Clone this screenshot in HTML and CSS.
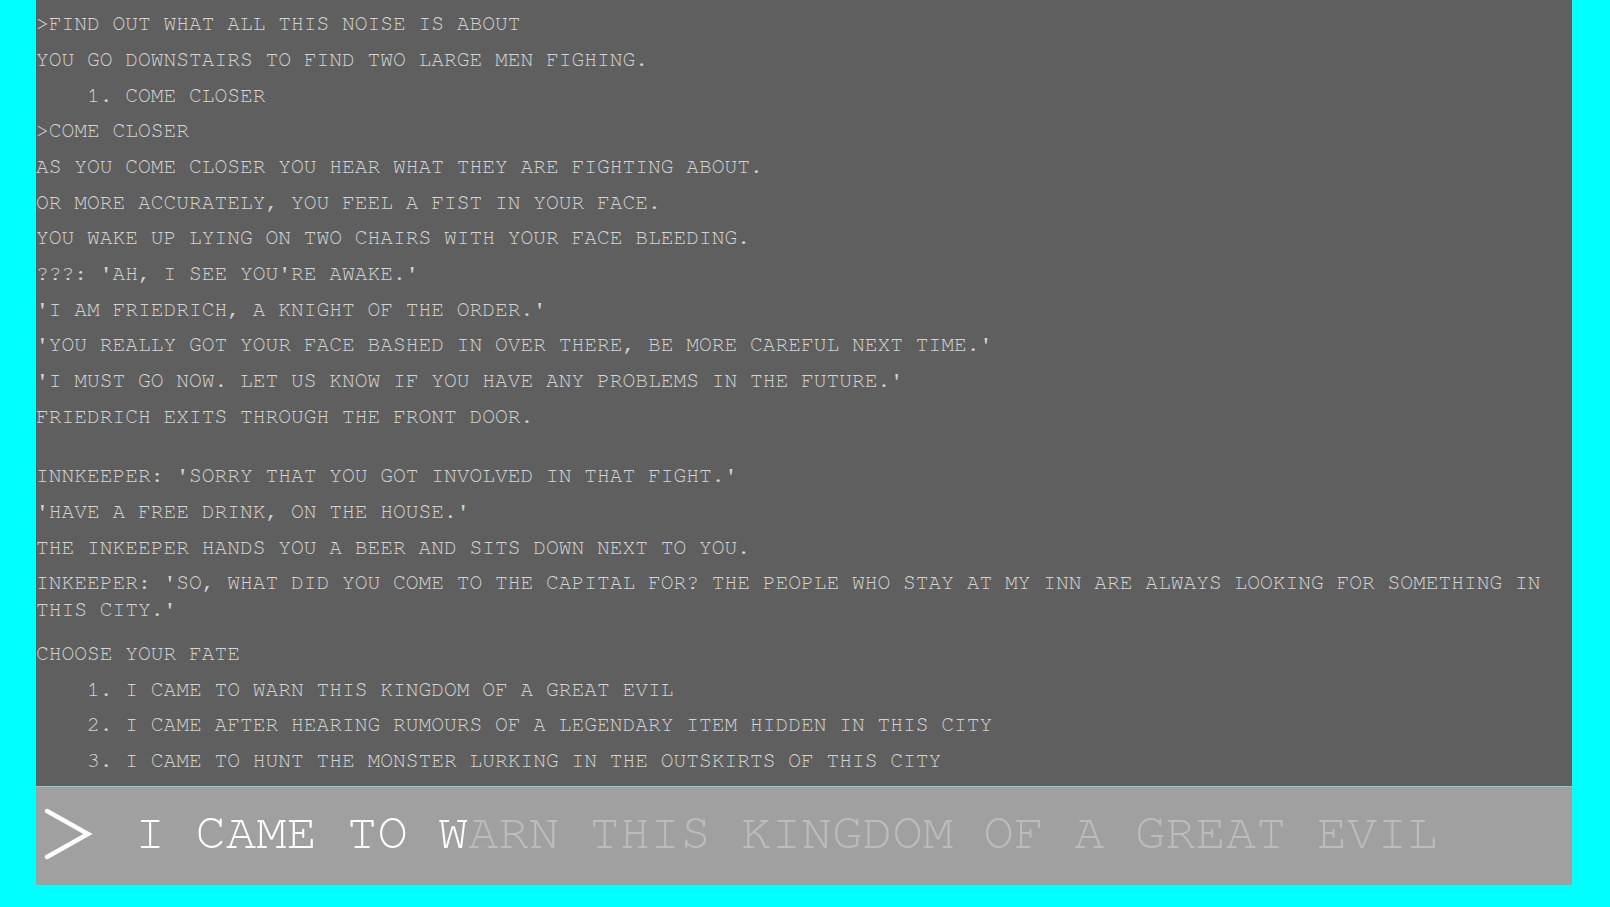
FILE: index.html
```html
<!DOCTYPE html>
<html lang="en">
<head>
<meta charset="utf-8">
<title>Text Adventure</title>
<link rel="stylesheet" href="styles.css">
</head>
<body>
<main class="game">
  <section class="log">
    <p class="line">&gt;FIND OUT WHAT ALL THIS NOISE IS ABOUT</p>
    <p class="line">YOU GO DOWNSTAIRS TO FIND TWO LARGE MEN FIGHING.</p>
    <p class="line choice">1. COME CLOSER</p>
    <p class="line">&gt;COME CLOSER</p>
    <p class="line">AS YOU COME CLOSER YOU HEAR WHAT THEY ARE FIGHTING ABOUT.</p>
    <p class="line">OR MORE ACCURATELY, YOU FEEL A FIST IN YOUR FACE.</p>
    <p class="line">YOU WAKE UP LYING ON TWO CHAIRS WITH YOUR FACE BLEEDING.</p>
    <p class="line">???: 'AH, I SEE YOU'RE AWAKE.'</p>
    <p class="line">'I AM FRIEDRICH, A KNIGHT OF THE ORDER.'</p>
    <p class="line">'YOU REALLY GOT YOUR FACE BASHED IN OVER THERE, BE MORE CAREFUL NEXT TIME.'</p>
    <p class="line">'I MUST GO NOW. LET US KNOW IF YOU HAVE ANY PROBLEMS IN THE FUTURE.'</p>
    <p class="line">FRIEDRICH EXITS THROUGH THE FRONT DOOR.</p>
    <p class="line scene">INNKEEPER: 'SORRY THAT YOU GOT INVOLVED IN THAT FIGHT.'</p>
    <p class="line">'HAVE A FREE DRINK, ON THE HOUSE.'</p>
    <p class="line">THE INKEEPER HANDS YOU A BEER AND SITS DOWN NEXT TO YOU.</p>
    <p class="line">INKEEPER: 'SO, WHAT DID YOU COME TO THE CAPITAL FOR? THE PEOPLE WHO STAY AT MY INN ARE ALWAYS LOOKING FOR SOMETHING IN THIS CITY.'</p>
    <p class="line prompt">CHOOSE YOUR FATE</p>
    <p class="line choice">1. I CAME TO WARN THIS KINGDOM OF A GREAT EVIL</p>
    <p class="line choice">2. I CAME AFTER HEARING RUMOURS OF A LEGENDARY ITEM HIDDEN IN THIS CITY</p>
    <p class="line choice">3. I CAME TO HUNT THE MONSTER LURKING IN THE OUTSKIRTS OF THIS CITY</p>
  </section>
  <section class="input-bar">
    <svg class="caret" width="56" height="56" viewBox="0 0 56 56" aria-hidden="true">
      <polyline points="6,3 47,26 6,49" fill="none" stroke="#ffffff" stroke-width="4.5" stroke-linecap="round" stroke-linejoin="miter"/>
    </svg>
    <div class="typed"><span class="typed-done">I CAME TO W</span><span class="typed-ghost">ARN THIS KINGDOM OF A GREAT EVIL</span></div>
  </section>
</main>
</body>
</html>
```

FILE: styles.css
```css
html, body {
  margin: 0;
  padding: 0;
}

body {
  background: #00ffff;
  font-family: "Nimbus Mono PS", "Nimbus Mono L", "FreeMono", "Courier 10 Pitch", "Liberation Mono", monospace;
  height: 907px;
  overflow: hidden;
}

.game {
  margin-left: 36px;
  width: 1536px;
  display: flex;
  flex-direction: column;
}

.log {
  background: #5f5f5f;
  height: 786px;
  box-sizing: border-box;
  padding-top: 11.3px;
  display: flex;
  flex-direction: column;
  gap: 9.16px;
  overflow: hidden;
}

.line {
  margin: 0;
  color: #d3d3d3;
  font-size: 21.25px;
  line-height: 26.5px;
  white-space: pre-wrap;
}

.choice {
  padding-left: 51px;
}

.scene {
  margin-top: 24.3px;
}

.prompt {
  margin-top: 8.3px;
}

.input-bar {
  background: #a0a0a0;
  border-top: 1px solid #8fcaca;
  height: 98px;
  display: flex;
  align-items: center;
  position: relative;
}

.caret {
  margin-left: 5px;
  flex: none;
}

.typed {
  margin-left: 38px;
  margin-bottom: 6px;
  font-size: 50.5px;
  line-height: 60px;
  white-space: pre;
}

.typed-done {
  color: #ffffff;
}

.typed-ghost {
  color: #bcbcbc;
}
```
